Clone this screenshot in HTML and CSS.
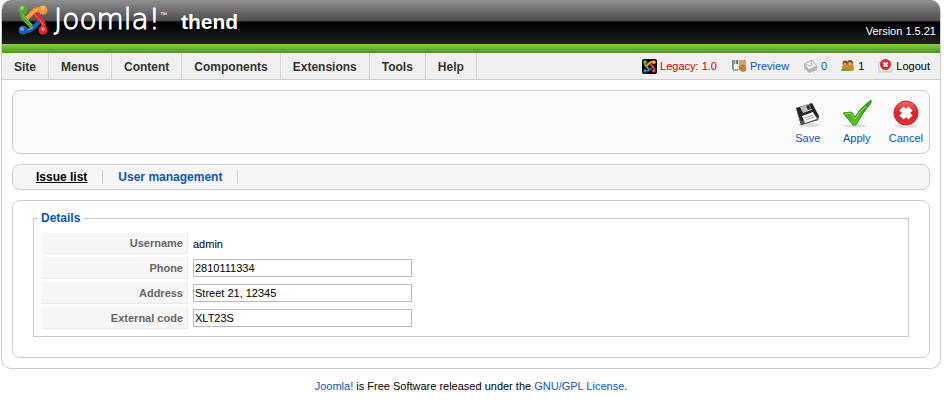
FILE: index.html
```html
<!DOCTYPE html>
<html lang="en">
<head>
  <meta charset="UTF-8" />
  <title>thend - Administration</title>
  <link rel="stylesheet" href="styles.css">
</head>
<body>

<!-- Shared symbols -->
<svg class="defs" width="0" height="0" aria-hidden="true">
  <symbol id="joomla" viewBox="0 0 30 30">
    <g fill="none" stroke-width="4.500" stroke-linejoin="round">
      <path d="M5 25 Q11 27 15 23 L23 15" stroke="#1a62ad" />
      <path d="M25 25 Q27 19 23 15 L15 7" stroke="#e8262b" />
      <path d="M25 5 Q19 3 15 7 L7 15" stroke="#f8932f" />
      <path d="M5 5 Q3 11 7 15 L15 23" stroke="#57a62c" />
      <path d="M15 23 L18 20" stroke="#1a62ad" />
    </g>
    <g fill="none" stroke="#fff" stroke-opacity=".35" stroke-width="1">
      <path d="M5 8 Q4 11 8 14 L14 20" />
      <path d="M22 4 Q18 4 15 7 L9 13" />
      <path d="M25 21 Q25 18 22 15 L17 10" />
      <path d="M8 25 Q12 25 15 22" />
    </g>
    <circle cx="5" cy="5" r="4.500" fill="#57a62c" />
    <circle cx="25" cy="5" r="4.500" fill="#f8932f" />
    <circle cx="25" cy="25" r="4.500" fill="#e8262b" />
    <circle cx="5" cy="25" r="4.500" fill="#1a62ad" />
    <g fill="#fff" fill-opacity=".4">
      <circle cx="4" cy="3" r="2" />
      <circle cx="25" cy="3" r="2" />
      <circle cx="25" cy="24" r="2" />
      <circle cx="4" cy="24" r="2" />
    </g>
  </symbol>
</svg>

<div class="page">

  <!-- Header -->
  <header class="header">
    <svg class="logo" width="30" height="30" aria-hidden="true"><use href="#joomla" /></svg>
    <span class="wordmark">Joomla!<sup>™</sup></span>
    <h1 class="site-name">thend</h1>
    <span class="version">Version 1.5.21</span>
  </header>
  <div class="green-bar"></div>

  <!-- Menu and status -->
  <div class="menu-bar">
    <nav class="menu">
      <a href="#site">Site</a>
      <a href="#menus">Menus</a>
      <a href="#content">Content</a>
      <a href="#components">Components</a>
      <a href="#extensions">Extensions</a>
      <a href="#tools">Tools</a>
      <a href="#help">Help</a>
    </nav>
    <div class="status">
      <span class="legacy">
        <svg width="15" height="15" viewBox="0 0 15 15">
          <rect width="15" height="15" rx="2" fill="#000" />
          <use href="#joomla" x="1" y="1" width="13" height="13" />
        </svg>
        Legacy: 1.0
      </span>
      <a href="#preview">
        <svg width="16" height="14" viewBox="0 0 16 14">
          <rect x="1" y="1" width="14" height="10" fill="#c9d3cc" />
          <rect x="1" y="1" width="3" height="9" fill="#7d9878" />
          <rect x="5" y="1" width="2" height="6" fill="#5d8390" />
          <rect x="8" y="1" width="7" height="5" fill="#d9a468" />
          <path d="M3 5h4v5H3z" fill="#eef3f6" />
          <path d="M8 7l4-2 3 2v5l-3 1-4-2z" fill="#cd7a32" />
          <path d="M2 10h5v2H2z" fill="#92aebe" />
        </svg>
        Preview
      </a>
      <a href="#messages">
        <svg width="15" height="15" viewBox="0 0 15 15">
          <path d="M1 5L9 1l5 6v4l-8 3-5-5z" fill="#b5b5b5" />
          <path d="M1 5l8-4 5 6-8 4z" fill="#efefef" stroke="#b2b2b2" />
          <path d="M1 5l7 2 1-6" fill="none" stroke="#bbb" />
        </svg>
        0
      </a>
      <span>
        <svg width="14" height="14" viewBox="0 0 14 14">
          <path d="M1 12V8q0-2 3-2h6q3 0 3 3v2l-2 1z" fill="#d88a25" />
          <circle cx="4" cy="4" r="2.500" fill="#7b4a18" />
          <circle cx="9" cy="4" r="3" fill="#8b531b" />
          <circle cx="9" cy="5" r="2" fill="#e9a94f" />
          <circle cx="4" cy="5" r="1.500" fill="#e9a94f" />
          <path d="M0 12q0-3 4-3t5 3z" fill="#55ad37" />
        </svg>
        1
      </span>
      <a class="logout" href="#logout">
        <svg width="15" height="15" viewBox="0 0 15 15">
          <path d="M1 3h13v9H1z" fill="#fff" stroke="#b9c4d2" />
          <path d="M1 13h13" stroke="#ccc" />
          <circle cx="7.500" cy="5.500" r="5.500" fill="#dc2730" />
          <path d="M5.500 3.500l4 4m0-4l-4 4" stroke="#fff" stroke-width="2" />
        </svg>
        Logout
      </a>
    </div>
  </div>

  <main class="content">

    <!-- Toolbar -->
    <div class="box toolbar">
      <button type="button">
        <svg width="32" height="32" viewBox="0 0 32 32">
          <ellipse cx="17" cy="26" rx="11" ry="2" fill="#ddd" />
          <path d="M4 9L20 4l7 13-1 4-17 5z" fill="#222" />
          <path d="M4 9l4 14 1 3 17-5 1-4-18 5z" fill="#555" />
          <path d="M8 8l9-3 3 6-9 3z" fill="#bbb" />
          <path d="M14 7l3-1 2 4-3 1z" fill="#333" />
          <path d="M10 17l11-4 4 7-12 4z" fill="#f6f6f6" />
          <path d="M13 19l8-3m-7 5l8-3" stroke="#9db5d0" />
        </svg>
        Save
      </button>
      <button type="button">
        <svg width="32" height="32" viewBox="0 0 32 32">
          <defs>
            <linearGradient id="tick" x1="0" y1="0" x2="0" y2="1">
              <stop offset="0" stop-color="#2f9c12" />
              <stop offset="1" stop-color="#5cc71c" />
            </linearGradient>
          </defs>
          <ellipse cx="14" cy="27" rx="12" ry="1.500" fill="#ddd" />
          <path d="M2 14l8-1 4 5Q19 9 30 1v3Q22 13 15 26h-3z" fill="url(#tick)" stroke="#318f12" />
          <path d="M4 15l5-1 5 6Q19 12 25 7" fill="none" stroke="#a6e572" />
        </svg>
        Apply
      </button>
      <button type="button">
        <svg width="32" height="32" viewBox="0 0 32 32">
          <defs>
            <linearGradient id="red" x1="0" y1="0" x2="0" y2="1">
              <stop offset="0" stop-color="#f0686b" />
              <stop offset=".5" stop-color="#dd1f26" />
              <stop offset="1" stop-color="#e8343a" />
            </linearGradient>
          </defs>
          <ellipse cx="16" cy="27" rx="12" ry="2" fill="#e2e2e2" />
          <circle cx="16" cy="14" r="12" fill="url(#red)" stroke="#cf2229" />
          <path d="M11.500 9.500l9 9m0-9l-9 9" stroke="#fff" stroke-width="6" />
        </svg>
        Cancel
      </button>
    </div>

    <!-- Submenu -->
    <nav class="box submenu">
      <a class="active" href="#issues">Issue list</a>
      <a href="#users">User management</a>
    </nav>

    <!-- Details form -->
    <form class="box details">
      <fieldset>
        <legend>Details</legend>
        <table>
          <tr>
            <th scope="row">Username</th>
            <td>admin</td>
          </tr>
          <tr>
            <th scope="row"><label for="phone">Phone</label></th>
            <td><input type="text" id="phone" name="phone" value="2810111334"></td>
          </tr>
          <tr>
            <th scope="row"><label for="address">Address</label></th>
            <td><input type="text" id="address" name="address" value="Street 21, 12345"></td>
          </tr>
          <tr>
            <th scope="row"><label for="code">External code</label></th>
            <td><input type="text" id="code" name="code" value="XLT23S"></td>
          </tr>
        </table>
      </fieldset>
    </form>

  </main>
</div>

<!-- Footer -->
<footer class="footer">
  <a href="#joomla-site">Joomla!</a> is Free Software released under the <a href="#license">GNU/GPL License</a>.
</footer>

</body>
</html>
```

FILE: styles.css
```css
* {
  box-sizing: border-box;
}
body {
  margin: 0 3px 0 1px;
  background: #fff;
  color: #000;
  font-family: "Liberation Sans", Arial, sans-serif;
  font-size: 11px;
  line-height: 14px;
}
a {
  color: #0b55c4;
  text-decoration: none;
}
.defs {
  position: absolute;
}
.page {
  border: 1px solid #ccc;
  border-top: 0;
  border-radius: 10px;
  overflow: hidden;
}

/* Header */
.header {
  display: flex;
  align-items: center;
  height: 44px;
  margin: 0 -1px;
  padding: 0 5px 4px 17px;
  background: linear-gradient(#909090, #4c4c4c 21px, #222 21px, #000 23px, #202020 44px);
  color: #fff;
}
.wordmark {
  margin-left: 6px;
  font-family: "DejaVu Sans", sans-serif;
  font-weight: 200;
  font-size: 28px;
  line-height: 36px;
  -webkit-text-stroke: 1px #fff;
}
.wordmark sup {
  font-size: 7px;
  line-height: 8px;
  vertical-align: 12px;
  -webkit-text-stroke: 0;
}
.site-name {
  margin: 4px 0 0 14px;
  font-size: 21px;
  line-height: 24px;
}
.version {
  align-self: flex-end;
  margin: 0 0 2px auto;
}
.green-bar {
  height: 9px;
  margin: 0 -1px;
  background: linear-gradient(#86cf4c, #4d9322);
}

/* Menu */
.menu-bar {
  display: flex;
  justify-content: space-between;
  height: 27px;
  background: #f0f0f0;
  border-bottom: 1px solid #ccc;
}
.menu {
  display: flex;
}
.menu a {
  padding: 7px 12px 0;
  border-right: 1px solid #d4d4d4;
  color: #333;
  font-size: 12px;
  font-weight: bold;
}
.status {
  display: flex;
  align-items: center;
  gap: 14px;
  padding-right: 10px;
}
.status > * {
  display: flex;
  align-items: center;
  gap: 3px;
}
.legacy {
  color: #c00;
}
.status .logout {
  color: #000;
}

/* Boxes */
.content {
  display: flex;
  flex-direction: column;
  gap: 10px;
  padding: 10px;
}
.box {
  border: 1px solid #ccc;
  border-radius: 8px;
}
.toolbar {
  display: flex;
  justify-content: flex-end;
  gap: 15px;
  height: 64px;
  padding: 8px 6px;
  background: #fbfbfb;
}
.toolbar button {
  display: flex;
  flex-direction: column;
  align-items: center;
  min-width: 34px;
  padding: 0;
  border: 0;
  background: none;
  color: #0b55c4;
  font: inherit;
  cursor: pointer;
}
.submenu {
  display: flex;
  padding: 5px 8px;
  background: #f6f6f6;
}
.submenu a {
  padding: 0 15px;
  border-right: 1px solid #ccc;
  font-size: 12px;
  font-weight: bold;
}
.submenu .active {
  color: #000;
  text-decoration: underline;
}

/* Form */
.details {
  padding: 10px 20px 20px;
}
fieldset {
  margin: 0;
  padding: 5px 4px 4px;
  border: 1px solid #ccc;
}
legend {
  padding: 0 3px;
  color: #0b55c4;
  font-size: 12px;
  font-weight: bold;
}
table {
  border-spacing: 3px;
}
th {
  width: 147px;
  padding: 3px 4px;
  background: #f6f6f6;
  border-right: 1px solid #e9e9e9;
  border-bottom: 1px solid #e9e9e9;
  color: #666;
  text-align: right;
}
td {
  padding: 2px;
}
input {
  display: block;
  width: 219px;
  height: 18px;
  padding: 1px;
  border: 1px solid #bbb;
  background: #fff;
  color: #000;
  font: inherit;
}
.footer {
  padding-top: 10px;
  text-align: center;
}
```
